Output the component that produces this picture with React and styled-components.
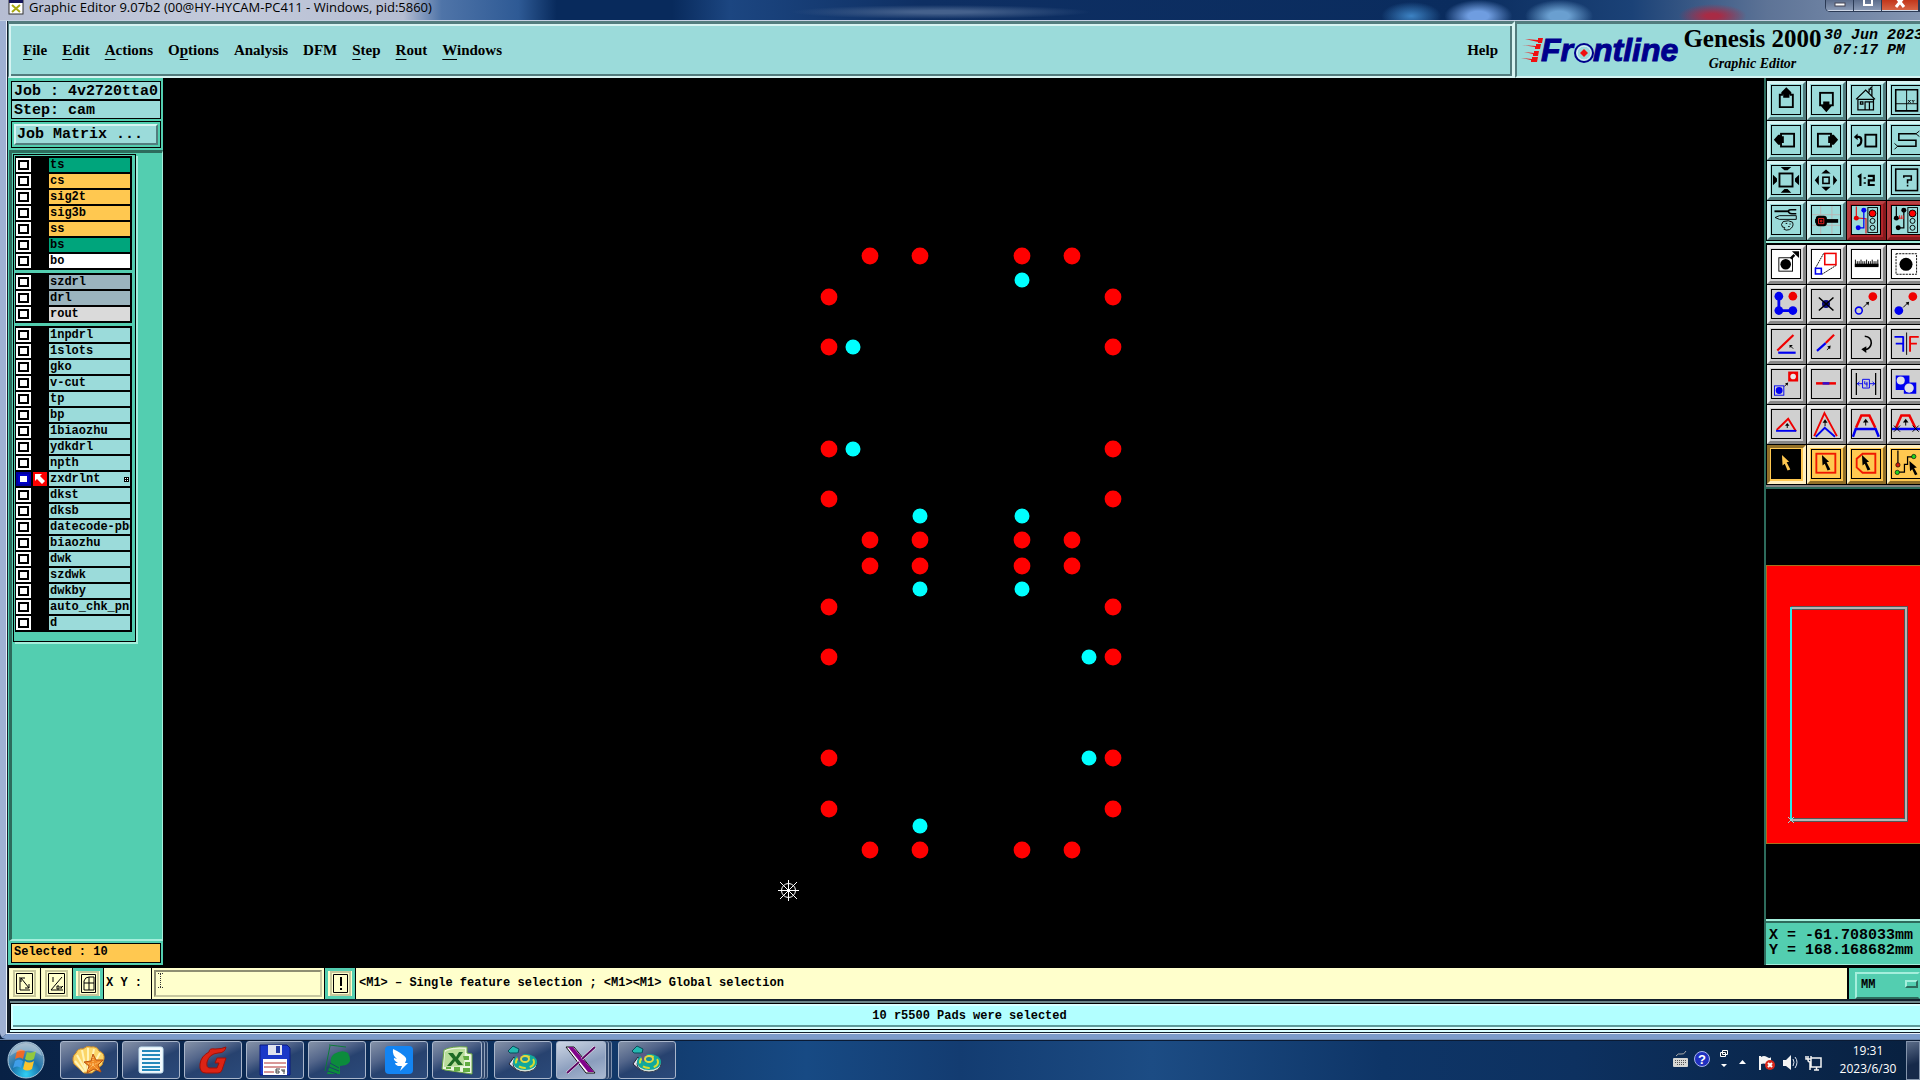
import { useState } from 'react'
import styled, { createGlobalStyle, css } from 'styled-components'

const colors = {
  face: '#9bdbda',
  faceLight: '#d6f4f2',
  faceDark: '#527c7d',
  teal: '#53ceb0',
  tealLight: '#a4efdc',
  tealDark: '#2d6b5c',
  orange: '#ffc850',
  green: '#00a57c',
  cream: '#ffffcc',
  status: '#b2ffff',
}

const mono = '"Liberation Mono", "Courier New", monospace'
const serif = '"Liberation Serif", "Times New Roman", serif'
const ui = '"Open Sans", "Segoe UI", sans-serif'

const GlobalStyle = createGlobalStyle`
  * {
    box-sizing: border-box;
  }

  body {
    margin: 0;
    background: #000;
    color: #000;
    overflow: hidden;
  }

  button, input, select {
    margin: 0;
    padding: 0;
    border: 0;
    border-radius: 0;
    font: inherit;
    color: inherit;
  }
`

const Desktop = styled.div`
  display: flex;
  flex-direction: column;
  min-height: 100vh;
  background: #0b2347;
`

/* ---------- window chrome ---------- */

const TitleBar = styled.div`
  display: flex;
  justify-content: space-between;
  height: 21px;
  padding-left: 8px;
  overflow: hidden;
  border-bottom: 1px solid #c4d0e2;
  background:
    radial-gradient(ellipse 30px 14px at 73.5% 80%, #3d83c4 0%, transparent 100%),
    radial-gradient(ellipse 34px 16px at 77% 80%, #6f9de0 30%, transparent 100%),
    radial-gradient(ellipse 34px 16px at 81.2% 80%, #6a9fd0 30%, transparent 100%),
    radial-gradient(ellipse 34px 12px at 89.2% 80%, #a82b45 20%, transparent 100%),
    radial-gradient(ellipse 150px 7px at 49% 60%, #45618c 20%, transparent 100%),
    linear-gradient(90deg, #b6bdd2 0%, #c3cadb 12%, #b5bdd2 21%, #4f74a8 23%, #2e5a95 27%, #082a5c 29%, #082a5c 35%, #1c4681 38%, #0e2f63 48%, #0a2c5e 76%, #1b4277 85%, #5d7396 92%, #8496b3 100%);
`

const WindowTitle = styled.div`
  display: flex;
  gap: 5px;
  font: 13px/14px ${ui};
  white-space: nowrap;
`

const WindowButtons = styled.div`
  display: flex;
  height: 12px;
  border: 1px solid #2b3a55;
  border-top: 0;
  border-radius: 0 0 0 5px;
  overflow: hidden;
`

const WindowButton = styled.button`
  display: flex;
  justify-content: center;
  width: ${props => (props.$close ? '37px' : '28px')};
  height: 11px;
  border-right: 1px solid #2b3a55;
  box-shadow: inset 0 -1px 0 #cdd6e6;
  background: ${props => (props.$close ? 'linear-gradient(#c2361b, #d8694a)' : 'linear-gradient(#5b6c8b, #8d9db8)')};
`

const WindowFrame = styled.div`
  display: flex;
  flex-direction: column;
  flex: 1;
  border-left: 6px solid #9fb1d3;
  border-bottom: 5px solid #7d9cca;
  box-shadow: inset 1px -1px 0 #e8f0fa;
  border-radius: 0 0 0 6px;
  padding: 0 0 4px 2px;
  background: #14202c;
`

/* ---------- header ---------- */

const Header = styled.header`
  display: flex;
  height: 57px;
`

const MenuBar = styled.nav`
  display: flex;
  flex: 1;
  align-items: center;
  gap: 15px;
  padding: 0 14px 0 14px;
  background: ${colors.face};
  border-style: solid;
  border-width: 3px 3px 2px 1px;
  border-color: ${colors.faceDark} ${colors.faceLight} ${colors.faceLight} ${colors.faceDark};
  box-shadow: inset 2px 2px 0 ${colors.faceLight}, inset -2px -2px 0 ${colors.faceDark};
`

const MenuButton = styled.button`
  background: none;
  font: bold 15px/20px ${serif};
  margin-left: ${props => (props.$last ? 'auto' : 0)};

  u {
    text-underline-offset: 4px;
    text-decoration-thickness: 1px;
  }
`

const Brand = styled.div`
  display: flex;
  flex: 0 0 405px;
  gap: 2px;
  padding-left: 4px;
  overflow: hidden;
  white-space: nowrap;
  background: ${colors.face};
  border-top: 3px solid ${colors.faceDark};
  border-left: 2px solid ${colors.faceDark};
  border-bottom: 2px solid ${colors.faceLight};
`

const BrandLogo = styled.svg`
  flex: 0 0 160px;
  height: 30px;
  margin-top: 12px;
  overflow: visible;
`

const BrandTitle = styled.div`
  flex: 0 0 139px;
  text-align: center;
`

const ProductName = styled.h1`
  margin: 0;
  font: bold 25px/30px ${serif};
`

const ProductPart = styled.p`
  margin: 0;
  font: italic bold 14px/20px ${serif};
`

const DateTime = styled.time`
  font: italic bold 15px/15px ${mono};
  white-space: pre;
  padding-top: 4px;
`

/* ---------- left column ---------- */

const Body = styled.div`
  display: flex;
  flex: 1;
  border-bottom: 3px solid #000;
`

const Sidebar = styled.aside`
  display: flex;
  flex-direction: column;
  flex: 0 0 155px;
  background: ${colors.teal};
`

const JobInfo = styled.div`
  display: flex;
  flex-direction: column;
  padding: 3px 2px 2px 3px;
`

const InfoBox = styled.div`
  height: 19px;
  padding-left: 2px;
  font: bold 15px/19px ${mono};
  white-space: nowrap;
  background: ${colors.face};
  border: 1px solid #000;
`

const MatrixFrame = styled.div`
  margin-top: 2px;
  padding: 2px;
  border: 1px solid #000;
`

const MatrixButton = styled.button`
  width: 100%;
  height: 21px;
  padding-left: 1px;
  text-align: left;
  font: bold 15px/17px ${mono};
  background: ${colors.face};
  border: 2px solid;
  border-color: ${colors.faceLight} ${colors.faceDark} ${colors.faceDark} ${colors.faceLight};
`

const LayerPanel = styled.div`
  flex: 1;
  margin-left: 1px;
  border: solid;
  border-width: 3px 1px 2px 3px;
  border-color: ${colors.tealDark} ${colors.tealLight} ${colors.tealLight} ${colors.tealDark};
`

const LayerList = styled.div`
  display: flex;
  flex-direction: column;
  gap: 3px;
  width: 123px;
  margin-top: 1px;
  margin-left: 1px;
  padding: 1px 3px 9px 1px;
  border: 1px solid #000;
  box-shadow: 2px 2px 0 ${colors.tealLight};
`

const LayerGroup = styled.ul`
  display: flex;
  flex-direction: column;
  gap: 2px;
  margin: 0;
  padding: 2px 2px 2px 1px;
  list-style: none;
  background: #000;
`

const LayerRow = styled.li`
  display: flex;
  height: 14px;
`

const LayerCheck = styled.input`
  appearance: none;
  flex: 0 0 15px;
  height: 14px;
  background: #fff;
  box-shadow: inset 0 0 0 2px #fff, inset 0 0 0 4px #000;

  &:checked {
    box-shadow: inset 0 0 0 2px #0000a0, inset 0 0 0 4px #0000c8;
  }
`

const LayerMark = styled.span`
  display: flex;
  flex: 0 0 18px;
  padding-left: 2px;
`

const LayerName = styled.label`
  position: relative;
  flex: 1;
  min-width: 0;
  padding-left: 1px;
  overflow: hidden;
  white-space: nowrap;
  font: bold 12px/14px ${mono};
  background: ${props => props.$bg};
`

const AffectedMark = styled.svg`
  position: absolute;
  right: 1px;
  top: 5px;
`

const SelectedCount = styled.div`
  height: 20px;
  margin: 2px 2px 2px 3px;
  padding-left: 2px;
  font: bold 12px/17px ${mono};
  background: ${colors.orange};
  border: 1px solid #000;
`

/* ---------- canvas ---------- */

const Canvas = styled.main`
  display: flex;
  flex: 1;
  min-width: 0;
  background: #000;

  svg {
    width: 100%;
    height: 887px;
  }
`

/* ---------- right column ---------- */

const ToolColumn = styled.aside`
  display: flex;
  flex-direction: column;
  flex: 0 0 156px;
  overflow: hidden;
  background: #000;
  border-left: 2px solid ${colors.tealDark};
`

const ToolGroup = styled.div`
  display: grid;
  grid-template-columns: repeat(4, 39px);
  gap: 1px;
  padding: ${props => props.$top} 0 1px 1px;
  border-bottom: 2px solid ${props => props.$line};
`

const skins = {
  view: css`
    background: ${colors.face};
    border-color: ${colors.faceLight} ${colors.faceDark} ${colors.faceDark} ${colors.faceLight};
  `,
  alert: css`
    background: #b3252a;
    border-color: #b84043 #861a1e #861a1e #b84043;
  `,
  white: css`
    background: #d8d8d8;
    border-color: #ececec #868686 #868686 #ececec;
  `,
  edit: css`
    background: #d0d0d0;
    border-color: #ececec #868686 #868686 #ececec;
  `,
  select: css`
    background: ${colors.orange};
    border-color: #fff0c0 #916f28 #916f28 #fff0c0;
  `,
  active: css`
    background: ${colors.orange};
    border-color: #916f28 #fff0c0 #fff0c0 #916f28;
  `,
}

const iconFill = {
  alert: colors.face,
  white: '#fff',
  active: '#000',
}

const ToolButton = styled.button`
  width: 39px;
  height: 39px;
  padding: 1px 2px 2px 1px;
  border: 3px solid;
  ${props => skins[props.$skin]}

  svg {
    display: block;
    width: 30px;
    height: 30px;
    border: 1px solid #000;
    background: ${props => iconFill[props.$skin] || 'none'};
  }
`

const MapPanel = styled.div`
  flex: 1;
  border-top: 2px solid ${colors.tealDark};

  svg {
    display: block;
    width: 154px;
    height: 430px;
  }
`

const Coordinates = styled.div`
  padding: 7px 0 6px 3px;
  font: bold 15px/15px ${mono};
  white-space: pre;
  background: ${colors.teal};
  border-top: 2px solid ${colors.tealLight};
  border-bottom: 1px solid ${colors.tealLight};
  box-shadow: inset 0 2px 0 ${colors.tealDark};
`

/* ---------- bottom bars ---------- */

const CommandBar = styled.div`
  display: flex;
  height: 31px;
  gap: 1px;
  padding-left: 1px;
  background: #000;
  font: bold 12px/30px ${mono};
`

const SnapButton = styled.button`
  display: flex;
  align-items: center;
  justify-content: center;
  flex: 0 0 ${props => (props.$raised ? '30px' : '31px')};
  background: ${colors.cream};
  border: ${props => (props.$raised ? `3px solid ${colors.teal}` : '1px solid #f4f4c4')};

  svg {
    outline: 2px solid #c8c89c;
    outline-offset: 1px;
  }
`

const CoordLabel = styled.label`
  flex: 0 0 47px;
  padding-left: 2px;
  white-space: pre;
  background: ${colors.cream};
`

const CoordField = styled.div`
  position: relative;
  flex: 0 0 172px;
  padding: 2px;
  background: ${colors.cream};
`

const CoordInput = styled.input`
  display: block;
  width: 100%;
  height: 27px;
  padding: 0 12px;
  background: ${colors.cream};
  border: 2px solid;
  border-color: #8f8f72 #c8c8a0 #c8c8a0 #8f8f72;
  outline: 0;
`

const TextPointer = styled.svg`
  position: absolute;
  left: 6px;
  top: 5px;
  pointer-events: none;
`

const Hint = styled.div`
  flex: 1;
  padding-left: 3px;
  white-space: nowrap;
  background: ${colors.cream};
`

const UnitsPanel = styled.div`
  position: relative;
  flex: 0 0 71px;
  margin-left: 1px;
  padding: 2px 0 2px 6px;
  background: ${colors.teal};

  svg {
    position: absolute;
    right: 2px;
    top: 12px;
    pointer-events: none;
  }
`

const UnitsSelect = styled.select`
  appearance: none;
  width: 100%;
  height: 27px;
  padding-left: 4px;
  line-height: 23px;
  background: ${colors.teal};
  border: 2px solid;
  border-color: ${colors.tealLight} ${colors.teal} ${colors.tealDark} ${colors.tealLight};
`

const StatusBar = styled.div`
  height: 27px;
  margin: 4px 0 0 2px;
  padding-left: 8px;
  text-align: center;
  font: bold 12px/24px ${mono};
  background: ${colors.status};
  border: 1px solid #000;
  border-right: 0;
  box-shadow: inset 2px 2px 0 #d8ffff, inset 0 -2px 0 #d8ffff, inset 0 -4px 0 #5e9a9a, 0 -2px 0 #6d8588, 0 2px 0 #d8ffff;
`

/* ---------- taskbar ---------- */

const Taskbar = styled.footer`
  display: flex;
  justify-content: space-between;
  height: 41px;
  border-top: 1px solid #6d87ac;
  box-shadow: inset 0 1px 0 #0a1a33;
  background: linear-gradient(90deg, #082145 0%, #0f3463 30%, #174a84 42%, #133c71 50%, #1c4c84 60%, #0e3567 72%, #0d3160 82%, #08203f 100%);
`

const TaskList = styled.div`
  display: flex;
  align-items: center;
  gap: 4px;
`

const StartButton = styled.button`
  width: 56px;
  height: 38px;
  padding-left: 7px;
  text-align: left;
  background: none;
`

const TaskButton = styled.button`
  display: flex;
  align-items: center;
  justify-content: center;
  width: ${props => (props.$stacked ? '50px' : '58px')};
  height: 38px;
  margin-right: ${props => (props.$stacked ? '8px' : 0)};
  border: 1px solid #a9b6cb;
  border-radius: 3px;
  background: ${props => (props.$active
    ? 'linear-gradient(160deg, #cdd6e4, #8a9dbd 60%, #aab9d2)'
    : 'linear-gradient(155deg, #8592a8 0%, #52658a 35%, #27426f 55%, #2b4a7a 100%)')};
  box-shadow: ${props => (props.$stacked
    ? '2px 0 0 #31496f, 3px 0 0 #92a3bd, 5px 0 0 #2a4268, 6px 0 0 #7d90ad'
    : 'none')};
`

const Tray = styled.div`
  display: flex;
  align-items: center;
  color: #fff;
`

const TrayIcons = styled.svg`
  width: 152px;
  height: 36px;
`

const Clock = styled.time`
  width: 76px;
  margin-left: 6px;
  text-align: center;
  font: 12px/18px ${ui};
`

const ShowDesktop = styled.button`
  width: 14px;
  height: 39px;
  border: 1px solid #8494ac;
  background: linear-gradient(160deg, #5b6c88, #16294a 60%);
`

const layerGroups = [
  [
    ['ts', colors.green],
    ['cs', colors.orange],
    ['sig2t', colors.orange],
    ['sig3b', colors.orange],
    ['ss', colors.orange],
    ['bs', colors.green],
    ['bo', '#ffffff'],
  ],
  [
    ['szdrl', '#9bb4be'],
    ['drl', '#9bb4be'],
    ['rout', '#dadada'],
  ],
  [
    '1npdrl', '1slots', 'gko', 'v-cut', 'tp', 'bp', '1biaozhu', 'ydkdrl', 'npth',
    'zxdrlnt', 'dkst', 'dksb', 'datecode-pbd', 'biaozhu', 'dwk', 'szdwk', 'dwkby',
    'auto_chk_pnl', 'd',
  ].map(name => [name, colors.face]),
]

const menus = [
  ['', 'F', 'ile'],
  ['', 'E', 'dit'],
  ['', 'A', 'ctions'],
  ['O', 'p', 'tions'],
  ['Analysis', '', ''],
  ['DFM', '', ''],
  ['', 'S', 'tep'],
  ['', 'R', 'out'],
  ['', 'W', 'indows'],
]

const redPads = [
  [870, 256], [920, 256], [1022, 256], [1072, 256],
  [829, 297], [1113, 297], [829, 347], [1113, 347],
  [829, 449], [1113, 449], [829, 499], [1113, 499],
  [870, 540], [920, 540], [1022, 540], [1072, 540],
  [870, 566], [920, 566], [1022, 566], [1072, 566],
  [829, 607], [1113, 607], [829, 657], [1113, 657],
  [829, 758], [1113, 758], [829, 809], [1113, 809],
  [870, 850], [920, 850], [1022, 850], [1072, 850],
]

const selectedPads = [
  [1022, 280], [853, 347], [853, 449], [920, 516], [1022, 516],
  [920, 589], [1022, 589], [1089, 657], [1089, 758], [920, 826],
]

// tool icons are drawn on a 90x90 grid
const blue = '#0000f0'
const red = '#f00000'

const Cursor = ({ fill = '#000' }) => (
  <path d="M32 16L55 38L47 39L59 63L50 66L41 44L34 50Z" fill={fill} />
)

const MiniArrow = ({ d, head }) => (
  <g>
    <path d={d} fill="none" stroke="#000" strokeWidth="3" />
    <path d={head} fill="#000" />
  </g>
)

const TrafficLight = () => (
  <g stroke="#000" strokeWidth="3">
    <rect x="51" y="5" width="31" height="80" fill={colors.face} />
    <circle cx="66" cy="24" r="11" fill="#f00" />
    <circle cx="66" cy="48" r="8" fill="none" />
    <circle cx="66" cy="70" r="8" fill="none" />
  </g>
)

const viewTools = [
  ['Pan up', 'view', <>
    <path d="M35 28H25V68H67V28H57" fill="none" stroke="#000" strokeWidth="6" />
    <path d="M46 4L62 20V27H56V38H36V27H30V20Z" />
  </>],
  ['Pan down', 'view', <>
    <rect x="26" y="22" width="41" height="40" fill="none" stroke="#000" strokeWidth="6" />
    <path d="M46 84L62 66V61H56V50H36V61H30V66Z" />
  </>],
  ['Home', 'view', <>
    <path d="M13 43L44 13L74 43M19 43H69V77H19ZM55 21V10H64V33M58 8L66 2M42 77V51H69M56 77V53M27 51H35V58H27Z" fill="none" stroke="#000" strokeWidth="4" />
  </>],
  ['Origin', 'view', <>
    <path d="M12 12H82V80H12Z" fill="none" stroke="#000" strokeWidth="5" />
    <path d="M47 12V80M12 57H82" fill="none" stroke="#000" strokeWidth="3" />
    <path d="M52 45L60 54M60 45L52 54M64 45L68 50V54M72 45L68 50" fill="none" stroke="#000" strokeWidth="3" />
  </>],
  ['Pan left', 'view', <>
    <rect x="29" y="25" width="42" height="41" fill="none" stroke="#000" strokeWidth="6" />
    <path d="M6 44L20 28H27V33H38V55H27V60H20Z" />
  </>],
  ['Pan right', 'view', <>
    <rect x="19" y="25" width="42" height="41" fill="none" stroke="#000" strokeWidth="6" />
    <path d="M84 44L70 28H63V33H52V55H63V60H70Z" />
  </>],
  ['Previous view', 'view', <>
    <rect x="43" y="28" width="35" height="38" fill="none" stroke="#000" strokeWidth="6" />
    <path d="M14 35H22Q30 36 30 46Q30 62 16 64" fill="none" stroke="#000" strokeWidth="7" />
    <path d="M6 35L18 24V46Z" />
  </>],
  ['Snake route', 'view', <>
    <path d="M77 25H22V46H77V65H17" fill="none" stroke="#000" strokeWidth="5" />
    <path d="M77 25L88 16M77 25L88 34M18 65L8 56M18 65L8 75" fill="none" stroke="#000" strokeWidth="3" />
  </>],
  ['Zoom in', 'view', <>
    <rect x="24" y="24" width="42" height="42" fill="none" stroke="#000" strokeWidth="6" />
    <path d="M28 3H62L50 14H40ZM28 86H62L50 74H40ZM3 28V62L16 50V40ZM87 28V62L74 50V40Z" />
  </>],
  ['Zoom out', 'view', <>
    <rect x="35" y="36" width="20" height="20" fill="none" stroke="#000" strokeWidth="5" />
    <path d="M45 11L60 24H30ZM45 80L60 67H30ZM9 46L22 30V62ZM81 46L68 30V62Z" />
  </>],
  ['Scale', 'view', <>
    <path d="M19 35L27 30V64M41 36V41M41 52V57M51 32H70V46H54V61H73" fill="none" stroke="#000" strokeWidth="7" />
  </>],
  ['Query', 'view', <>
    <rect x="12" y="10" width="70" height="69" fill="none" stroke="#000" strokeWidth="5" />
    <path d="M38 38V32H62V45H50V56M50 60V66" fill="none" stroke="#000" strokeWidth="5" />
  </>],
  ['Setup', 'view', <>
    <path d="M8 17H52" fill="none" stroke="#000" strokeWidth="6" />
    <path d="M78 12H64Q53 11 53 17Q53 24 64 25H78" fill="none" stroke="#000" strokeWidth="5" />
    <path d="M10 37L24 31H78V43H24ZM36 50Q54 44 66 52Q72 66 56 76Q44 80 38 74Q46 68 34 68Q26 60 36 50ZM44 56H49M56 58H60M52 66H57" fill="none" stroke="#000" strokeWidth="3" />
  </>],
  ['Grid snap', 'view', <>
    <path d="M28 0V90M64 0V90M0 28H90M0 62H90" stroke="#b9b3b3" strokeWidth="3" />
    <path d="M10 48H84" stroke="#000" strokeWidth="12" />
    <rect x="12" y="31" width="36" height="34" rx="10" />
    <path d="M21 40H38V57H21ZM27 46H32V51H27Z" fill="none" stroke="#f02020" strokeWidth="3" />
  </>],
  ['Net check', 'alert', <>
    <path d="M14 2V38L45 41V88" fill="none" stroke="#e02020" strokeWidth="4" />
    <path d="M38 14V70H20" fill="none" stroke={blue} strokeWidth="4" />
    <circle cx="14" cy="39" r="8" fill="#e00000" />
    <circle cx="38" cy="14" r="8" fill={blue} />
    <circle cx="20" cy="70" r="8" fill={blue} />
    <TrafficLight />
  </>],
  ['Clearance check', 'alert', <>
    <path d="M14 2V38M38 14V70H20" fill="none" stroke="#000" strokeWidth="4" />
    <path d="M14 39H34M24 30V42M30 30V42M36 30V42" fill="none" stroke="#e02020" strokeWidth="3" />
    <circle cx="14" cy="39" r="8" />
    <circle cx="38" cy="14" r="8" />
    <circle cx="20" cy="70" r="8" />
    <TrafficLight />
  </>],
]

const editTools = [
  ['Move', 'white', <>
    <rect x="22" y="25" width="44" height="43" fill="none" stroke="#000" strokeWidth="3" />
    <circle cx="44" cy="46" r="17" />
    <path d="M60 28L72 16" stroke="#000" strokeWidth="8" />
    <path d="M64 4H87V26Z" />
  </>],
  ['Stretch', 'white', <>
    <path d="M11 58L38 10M32 78L80 48" fill="none" stroke="#000" strokeWidth="3" strokeDasharray="6 2" />
    <rect x="41" y="11" width="36" height="36" fill="none" stroke={red} strokeWidth="5" />
    <rect x="11" y="59" width="19" height="18" fill="none" stroke={blue} strokeWidth="5" />
  </>],
  ['Measure', 'white', <>
    <path d="M11 31V53M17 36V53M23 36V53M29 31V53M35 36V53M41 36V53M47 31V53M53 36V53M59 36V53M65 31V53M71 36V53M77 36V53M83 31V53" stroke="#000" strokeWidth="3" />
    <rect x="9" y="44" width="76" height="11" />
  </>],
  ['Select area', 'white', <>
    <rect x="13" y="12" width="66" height="66" fill="none" stroke="#000" strokeWidth="3" strokeDasharray="7 3" />
    <circle cx="45" cy="46" r="21" />
  </>],
  ['Add line', 'edit', <>
    <path d="M22 20V66H67" fill="none" stroke={blue} strokeWidth="9" />
    <circle cx="22" cy="20" r="14" fill={blue} />
    <circle cx="22" cy="66" r="14" fill={blue} />
    <circle cx="67" cy="66" r="14" fill={blue} />
    <circle cx="67" cy="20" r="14" fill={red} />
  </>],
  ['Delete', 'edit', <>
    <circle cx="45" cy="45" r="13" fill="#0a0a80" />
    <path d="M22 24L69 66M69 24L22 66" stroke="#000" strokeWidth="5" />
  </>],
  ['Move pad', 'edit', <>
    <circle cx="67" cy="21" r="14" fill={red} />
    <circle cx="22" cy="66" r="11" fill="none" stroke={blue} strokeWidth="5" />
    <MiniArrow d="M36 56L50 42" head="M55 38L44 40L53 50Z" />
  </>],
  ['Copy pad', 'edit', <>
    <circle cx="67" cy="21" r="14" fill={red} />
    <circle cx="22" cy="66" r="14" fill={blue} />
    <MiniArrow d="M36 56L50 42" head="M55 38L44 40L53 50Z" />
  </>],
  ['Rotate', 'edit', <>
    <path d="M69 16L17 66" stroke={red} strokeWidth="7" />
    <path d="M20 73H76" stroke={blue} strokeWidth="7" />
    <MiniArrow d="M68 60L60 52" head="M56 48H67L57 58Z" />
  </>],
  ['Extend line', 'edit', <>
    <path d="M71 15L44 42" stroke={red} strokeWidth="7" />
    <path d="M44 42L16 67" stroke={blue} strokeWidth="7" />
    <MiniArrow d="M48 64L56 56" head="M60 50L49 53L58 62Z" />
  </>],
  ['Flip arc', 'edit', <>
    <path d="M41 20Q62 22 62 42Q60 60 42 63" fill="none" stroke="#000" strokeWidth="5" />
    <path d="M30 62L46 52V74Z" />
  </>],
  ['Mirror', 'edit', <>
    <path d="M47 8V80" stroke="#000" strokeWidth="3" />
    <path d="M8 22H36M12 44H36M36 20V70" fill="none" stroke={blue} strokeWidth="6" />
    <path d="M86 22H58M80 44H58M58 20V70" fill="none" stroke={red} strokeWidth="6" />
  </>],
  ['Resize', 'edit', <>
    <rect x="52" y="5" width="32" height="32" fill={red} />
    <circle cx="68" cy="21" r="9" fill="#e8e8e8" />
    <rect x="8" y="51" width="30" height="30" fill="none" stroke={blue} strokeWidth="3" />
    <circle cx="23" cy="66" r="11" fill={blue} />
    <MiniArrow d="M40 52L48 45" head="M52 40L42 43L50 51Z" />
  </>],
  ['Merge', 'edit', <>
    <path d="M13 43H77" stroke={red} strokeWidth="8" />
    <path d="M34 43H56" stroke="#3010d0" strokeWidth="8" />
  </>],
  ['Spacing', 'edit', <>
    <path d="M14 10V80M76 10V80" stroke="#000" strokeWidth="4" />
    <path d="M34 30H56V58H34ZM16 44H34M56 44H74M24 38L17 44L24 50M66 38L73 44L66 50M41 36V45H50M48 38V54" fill="none" stroke={blue} strokeWidth="3" />
  </>],
  ['Reshape', 'edit', <>
    <path d="M12 18H56V40H78V76H38V64H12Z" fill={blue} />
    <circle cx="28" cy="34" r="13" fill="#e0e0e8" />
    <circle cx="55" cy="58" r="15" fill="#e0e0e8" />
  </>],
  ['Chamfer', 'edit', <>
    <path d="M15 64L52 28L77 68" fill="none" stroke={red} strokeWidth="6" />
    <path d="M13 67H78" stroke={blue} strokeWidth="6" />
    <MiniArrow d="M49 58V48" head="M49 42L56 51H42Z" />
  </>],
  ['Peak', 'edit', <>
    <path d="M7 84L40 10L80 84" fill="none" stroke={red} strokeWidth="6" />
    <path d="M12 86L41 57L74 86" fill="none" stroke={blue} strokeWidth="6" />
    <MiniArrow d="M42 52V38" head="M42 30L50 41H34Z" />
  </>],
  ['Trapezoid', 'edit', <>
    <path d="M13 57L30 18H56L75 57" fill="none" stroke={red} strokeWidth="8" />
    <path d="M3 86L12 61H76L86 86" fill="none" stroke={blue} strokeWidth="8" />
    <MiniArrow d="M44 50V36" head="M44 28L53 40H35Z" />
  </>],
  ['Trim', 'edit', <>
    <path d="M13 57L30 18H56L75 57" fill="none" stroke={red} strokeWidth="8" />
    <path d="M0 61H90" stroke={blue} strokeWidth="8" />
    <path d="M6 50L26 70M26 50L6 70M66 50L86 70M86 50L66 70" stroke="#000" strokeWidth="3" />
    <MiniArrow d="M44 50V36" head="M44 28L53 40H35Z" />
  </>],
  ['Select single', 'active', <Cursor fill={colors.orange} />],
  ['Select rectangle', 'select', <>
    <rect x="14" y="12" width="61" height="61" fill="none" stroke="#f01800" strokeWidth="6" />
    <Cursor />
  </>],
  ['Select polygon', 'select', <>
    <path d="M34 12H75V73H34L15 56V28Z" fill="none" stroke="#f01800" strokeWidth="6" />
    <Cursor />
  </>],
  ['Select net', 'select', <>
    <path d="M19 2V46M19 71H40V46H50V22H68" fill="none" stroke="#000" strokeWidth="4" />
    <g stroke="#000" strokeWidth="2">
      <circle cx="19" cy="48" r="7" fill="#d02010" />
      <circle cx="17" cy="72" r="7" fill="#20d020" />
      <circle cx="70" cy="21" r="7" fill="#20d020" />
    </g>
    <path d="M56 35L80 56L71 58L82 78L74 81L65 62L58 68Z" />
  </>],
]

const Tools = ({ items }) => items.map(([label, skin, icon]) => (
  <ToolButton key={label} $skin={skin} aria-label={label}>
    <svg viewBox="0 0 90 90">{icon}</svg>
  </ToolButton>
))

const TapeIcon = () => (
  <svg width="36" height="30" viewBox="0 0 36 30">
    <path d="M3 6L8 1L14 4L13 8H5Z" fill="#24b8b0" stroke="#0a4a5a" />
    <path d="M4 19L9 12L14 22L11 25Z" fill="#e4e4ee" stroke="#223" />
    <ellipse cx="20" cy="19" rx="12" ry="8" fill="#d6e2d8" stroke="#333c50" />
    <ellipse cx="20" cy="17" rx="12" ry="8" fill="#12a89c" />
    <ellipse cx="20" cy="17" rx="9" ry="6" fill="none" stroke="#d8dc30" strokeWidth="2" strokeDasharray="7 4" />
    <path d="M11 9Q16 6 20 12L14 17Z" fill="#5a5a88" />
    <ellipse cx="20" cy="14" rx="5" ry="4" fill="#e2d840" />
    <ellipse cx="20" cy="14" rx="3" ry="2" fill="#1a8c98" />
  </svg>
)

const tasks = [
  ['Shell', {}, (
    <svg width="34" height="30" viewBox="0 0 34 30">
      <path d="M12 28L2 19Q-1 12 4 8Q6 3 11 4Q15 0 19 2Q25 1 27 6Q33 8 32 14L30 20L20 28Z" fill="#fbd568" stroke="#c9882a" />
      <path d="M14 26L5 10M14 25L10 5M16 24L16 3M18 24L22 4M19 24L28 8M12 27L3 16" stroke="#fff3b8" strokeWidth="2" />
      <path d="M21 9L24 15L31 15L26 20L29 27L22 24L15 28L17 21L12 17L19 16Z" fill="#f08a26" stroke="#b85210" />
      <path d="M21 12V20L28 17M21 20L26 25M21 20L16 25M21 20L15 18" fill="none" stroke="#ffd080" strokeDasharray="1 1" />
    </svg>
  )],
  ['Notepad', {}, (
    <svg width="26" height="28" viewBox="0 0 26 28">
      <rect x="1" y="1" width="24" height="26" rx="2" fill="#f2f9fd" stroke="#c8e4f2" />
      <path d="M4 5H22M4 9H22M4 13H22M4 17H22M4 21H22M4 24H22" stroke="#2588ba" strokeWidth="2" />
    </svg>
  )],
  ['Genesis', {}, (
    <svg width="30" height="28" viewBox="0 0 30 28">
      <path d="M28 1Q27 7 20 7Q11 8 9 16Q8 22 12 22H19L21 17H17L19 12H28L24 24Q23 27 20 27H8Q1 27 2 18Q3 10 11 6Q11 2 17 3Q24 3 28 1Z" fill="#dc2314" stroke="#a01008" />
    </svg>
  )],
  ['Floppy', {}, (
    <svg width="32" height="32" viewBox="0 0 32 32">
      <path d="M1 1H28L31 4V31H1Z" fill="#1a38c8" stroke="#0a1a80" />
      <rect x="9" y="1" width="14" height="10" fill="#dfe2ee" />
      <rect x="17" y="2" width="4" height="7" fill="#2038a0" />
      <rect x="4" y="15" width="24" height="16" fill="#fff" />
      <path d="M5 19H27M5 23H27M5 28H15" stroke="#b03030" />
      <path d="M21 25H17V29H20V27H17M23 25V27H26M25 25V30M28 28H29" fill="none" stroke="#444" />
    </svg>
  )],
  ['PCB', {}, (
    <svg width="34" height="32" viewBox="0 0 34 32">
      <path d="M9 1Q18 2 26 3M10 2L5 27" fill="none" stroke="#0d7c3a" />
      <path d="M14 10Q22 5 28 9Q33 18 26 21L20 22V30H7L11 18Q10 13 14 10Z" fill="#0c8c3c" />
      <path d="M10 19L19 24M9 23L19 27M8 27L17 30" stroke="#1a4466" />
    </svg>
  )],
  ['DingTalk', {}, (
    <svg width="28" height="28" viewBox="0 0 28 28">
      <rect width="28" height="28" rx="4" fill="#1384f2" />
      <path d="M8 3Q17 7 21 12Q22 14 20 17H23L15 25L17 20H13Q10 19 10 17L13 17Q8 14 9 12L12 13Q7 9 8 3Z" fill="#fff" />
    </svg>
  )],
  ['Excel', { $stacked: true }, (
    <svg width="32" height="30" viewBox="0 0 32 30">
      <path d="M3 5Q10 1 26 2V8L31 9V29L4 25L1 24Z" fill="#eaf5df" stroke="#6aa845" />
      <path d="M4 7Q10 3 24 4L23 21L3 22Z" fill="#b8dd9a" />
      <path d="M7 8H12L15 12L18 7H22L17 14L22 20H17L14 16L10 21H6L12 14Z" fill="#1d6b24" />
      <path d="M22 11H28V15H23ZM24 17H29V21H24ZM5 22H10V24H5ZM13 22H19V26H13ZM22 23H29V27H22Z" fill="#62ad42" />
    </svg>
  )],
  ['Toolkit', {}, <TapeIcon />],
  ['X server', { $stacked: true, $active: true }, (
    <svg width="34" height="28" viewBox="0 0 34 28">
      <path d="M2 1H10L31 27H22Z" fill="#fff" stroke="#111" />
      <path d="M4 1H9L30 26H24Z" fill="#82058a" />
      <path d="M31 1L18 13M15 16L3 27" stroke="#fff" strokeWidth="3" />
      <path d="M31 1L18 13M15 16L3 27" stroke="#5c0862" strokeWidth="2" />
    </svg>
  )],
  ['Toolkit 2', {}, <TapeIcon />],
]

function FrontlineLogo() {
  return (
    <BrandLogo viewBox="0 0 160 30">
      <path d="M4 3L17 4V2H22L21 7H17V6ZM1 9L15 10V8H20L19 13H14V11ZM3 16L13 17V15H18L17 20H12V18ZM0 22L11 23V21H17L16 26H10V24Z" fill="#f01010" />
      <g fill="#00008c" stroke="#00008c" fontFamily='"Liberation Sans", Arial, sans-serif' fontWeight="bold" fontStyle="italic" fontSize="32">
        <text x="20" y="25">Fr</text>
        <text x="72" y="25">ntline</text>
      </g>
      <circle cx="63" cy="17" r="9" fill="none" stroke="#00008c" strokeWidth="2" />
      <circle cx="63" cy="17" r="7" fill="none" stroke="#e8f0ff" />
      <path d="M63 13L67 17L63 21L59 17Z" fill="#f01010" />
    </BrandLogo>
  )
}

function LayerSidebar() {
  return (
    <Sidebar>
      <JobInfo>
        <InfoBox>Job : 4v2720tta0</InfoBox>
        <InfoBox>Step: cam</InfoBox>
        <MatrixFrame>
          <MatrixButton>Job Matrix ...</MatrixButton>
        </MatrixFrame>
      </JobInfo>
      <LayerPanel>
        <LayerList>
          {layerGroups.map((group, i) => (
            <LayerGroup key={i}>
              {group.map(([name, bg]) => {
                const isWork = name === 'zxdrlnt'
                return (
                  <LayerRow key={name}>
                    <LayerCheck type="checkbox" id={`layer-${name}`} defaultChecked={isWork} />
                    <LayerMark>
                      {isWork && (
                        <svg width="14" height="14" viewBox="0 0 14 14">
                          <rect width="14" height="14" fill="#f00" />
                          <path d="M2 2H9L7 4L12 9L9 12L4 7L2 9Z" fill="#fff" />
                        </svg>
                      )}
                    </LayerMark>
                    <LayerName htmlFor={`layer-${name}`} $bg={bg}>
                      {name}
                      {isWork && (
                        <AffectedMark width="5" height="5" viewBox="0 0 5 5">
                          <path d="M0 0H5V5H0Z" />
                          <path d="M1 1H2V2H1ZM3 1H4V2H3ZM1 3H2V4H1ZM3 3H4V4H3Z" fill="#fff" />
                        </AffectedMark>
                      )}
                    </LayerName>
                  </LayerRow>
                )
              })}
            </LayerGroup>
          ))}
        </LayerList>
      </LayerPanel>
      <SelectedCount>Selected : 10</SelectedCount>
    </Sidebar>
  )
}

function Board() {
  return (
    <Canvas>
      <svg viewBox="163 78 1601 887">
        {redPads.map(([x, y]) => (
          <circle key={`${x}-${y}`} cx={x} cy={y} r="8.4" fill="#f00" />
        ))}
        {selectedPads.map(([x, y]) => (
          <circle key={`${x}-${y}`} cx={x} cy={y} r="7.5" fill="#0ff" />
        ))}
        <g fill="none" stroke="#fff">
          <circle cx="788.5" cy="890.5" r="7" />
          <path d="M778 890.5H799M788.5 880V901M780 882L797 899M797 882L780 899" />
        </g>
      </svg>
    </Canvas>
  )
}

function App() {
  const [coords, setCoords] = useState('')
  const [units, setUnits] = useState('MM')

  return (
    <Desktop>
      <GlobalStyle />
      <TitleBar>
        <WindowTitle>
          <svg width="16" height="15" viewBox="0 0 16 15">
            <rect x="1" y="0" width="14" height="14" fill="#fff" stroke="#333" />
            <rect x="1" y="0" width="14" height="3" fill="#15155a" />
            <path d="M4 5L12 12M12 5L4 12" stroke="#a8a810" strokeWidth="2" />
          </svg>
          Graphic Editor 9.07b2 (00@HY-HYCAM-PC411 - Windows, pid:5860)
        </WindowTitle>
        <WindowButtons>
          <WindowButton aria-label="Minimize">
            <svg width="12" height="8"><rect x="1" y="3" width="10" height="3" fill="#fff" stroke="#445" /></svg>
          </WindowButton>
          <WindowButton aria-label="Restore">
            <svg width="12" height="8"><rect x="2" y="-3" width="8" height="8" fill="none" stroke="#fff" strokeWidth="2" /></svg>
          </WindowButton>
          <WindowButton $close aria-label="Close">
            <svg width="12" height="8"><path d="M2 -3L10 7M10 -3L2 7" stroke="#fff" strokeWidth="3" /></svg>
          </WindowButton>
        </WindowButtons>
      </TitleBar>

      <WindowFrame>
        <Header>
          <MenuBar>
            {menus.map(([before, key, after]) => (
              <MenuButton key={before + key + after}>
                {before}{key && <u>{key}</u>}{after}
              </MenuButton>
            ))}
            <MenuButton $last>Help</MenuButton>
          </MenuBar>
          <Brand>
            <FrontlineLogo />
            <BrandTitle>
              <ProductName>Genesis 2000</ProductName>
              <ProductPart>Graphic Editor</ProductPart>
            </BrandTitle>
            <DateTime>{'30 Jun 2023\n 07:17 PM'}</DateTime>
          </Brand>
        </Header>

        <Body>
          <LayerSidebar />
          <Board />
          <ToolColumn>
            <ToolGroup $top="3px" $line={colors.tealLight}>
              <Tools items={viewTools} />
            </ToolGroup>
            <ToolGroup $top="2px" $line="#868686">
              <Tools items={editTools} />
            </ToolGroup>
            <MapPanel>
              <svg viewBox="1766 489 154 430">
                <rect x="1766.5" y="565.5" width="160" height="278" fill="#f00" stroke="#a8701c" />
                <path d="M1791 608H1906V820H1791" fill="none" stroke="#555" strokeWidth="4" />
                <path d="M1791 608H1906V820H1791" fill="none" stroke="#b4b4b4" strokeWidth="2" />
                <path d="M1791 607V820" stroke="#2ee8e8" strokeWidth="2" />
                <path d="M1788 817L1794 823M1794 817L1788 823" stroke="#9bdbda" />
              </svg>
            </MapPanel>
            <Coordinates>{'X = -61.708033mm\nY = 168.168682mm'}</Coordinates>
          </ToolColumn>
        </Body>

        <CommandBar>
          <SnapButton aria-label="Snap off">
            <svg width="17" height="21" viewBox="0 0 17 21" fill="none" stroke="#000">
              <path d="M.5 .5H16.5V20.5H.5ZM4 4V17H14M5 5L13 15M5 9V5H9M13 11V15H9" />
            </svg>
          </SnapButton>
          <SnapButton aria-label="Snap to angle">
            <svg width="17" height="21" viewBox="0 0 17 21" fill="none" stroke="#000">
              <path d="M.5 .5H16.5V20.5H.5ZM14 4L3 17H15M5 4V9M9 13V16H11V13ZM13 13V16M15 13L13 15" />
            </svg>
          </SnapButton>
          <SnapButton $raised aria-label="Snap to grid">
            <svg width="15" height="19" viewBox="0 0 15 19" fill="none" stroke="#000">
              <path d="M.5 .5H14.5V18.5H.5ZM8 3V16M3 9H13M3 16V7Q4 3 8 3H13V16Z" />
            </svg>
          </SnapButton>
          <CoordLabel htmlFor="xy">X Y :</CoordLabel>
          <CoordField>
            <CoordInput id="xy" value={coords} onChange={e => setCoords(e.target.value)} />
            <TextPointer width="5" height="15" viewBox="0 0 5 15">
              <path d="M0 .5H5M0 14.5H5M2.5 1V14" stroke="#333" strokeDasharray="1 1" />
            </TextPointer>
          </CoordField>
          <SnapButton $raised aria-label="Repeat message">
            <svg width="15" height="19" viewBox="0 0 15 19">
              <path d="M.5 .5H14.5V18.5H.5Z" fill="none" stroke="#000" />
              <path d="M7 3H9V12H7ZM7 14H9V16H7Z" />
            </svg>
          </SnapButton>
          <Hint>{'<M1> – Single feature selection ; <M1><M1> Global selection'}</Hint>
          <UnitsPanel>
            <UnitsSelect aria-label="Units" value={units} onChange={e => setUnits(e.target.value)}>
              <option>MM</option>
              <option>Inch</option>
            </UnitsSelect>
            <svg width="13" height="8" viewBox="0 0 13 8">
              <path d="M0 8V0H13L11 2H2V6Z" fill={colors.tealLight} />
              <path d="M0 8H13V0L11 2V6H2Z" fill={colors.tealDark} />
            </svg>
          </UnitsPanel>
        </CommandBar>

        <StatusBar>10 r5500 Pads were selected</StatusBar>
      </WindowFrame>

      <Taskbar>
        <TaskList>
          <StartButton aria-label="Start">
            <svg width="38" height="38" viewBox="0 0 38 38">
              <defs>
                <radialGradient id="orb" cx="50%" cy="90%" r="90%">
                  <stop offset="0" stopColor="#2fd0f5" />
                  <stop offset="45%" stopColor="#1c74ac" />
                  <stop offset="100%" stopColor="#8fa8bd" />
                </radialGradient>
              </defs>
              <circle cx="19" cy="19" r="18" fill="url(#orb)" stroke="#a8c4d8" />
              <path d="M10 10Q14 7 18 10L16 18Q13 15 8 18Z" fill="#ee6a28" />
              <path d="M20 11Q24 13 29 10L27 18Q22 21 18 18Z" fill="#92c83e" />
              <path d="M8 20Q12 17 16 20L14 27Q10 24 6 27Z" fill="#3f9ee8" />
              <path d="M18 20Q22 23 27 20L25 28Q20 31 16 28Z" fill="#fcc42c" />
              <path d="M3 15Q6 3 19 2Q32 3 35 15Q27 9 19 10Q11 9 3 15Z" fill="#fff" opacity=".3" />
            </svg>
          </StartButton>
          {tasks.map(([label, state, icon]) => (
            <TaskButton key={label} aria-label={label} {...state}>{icon}</TaskButton>
          ))}
        </TaskList>
        <Tray>
          <TrayIcons viewBox="0 0 152 36">
            <g fill="#d8d8d4">
              <rect x="1" y="16" width="15" height="9" rx="1" />
              <path d="M4 14Q6 11 9 12T14 9" fill="none" stroke="#aaa" />
              <path d="M3 18.500H14M3 20.500H14M5 22.500H12" stroke="#555" strokeDasharray="1 1" />
            </g>
            <circle cx="30" cy="17" r="7.500" fill="#2030c0" stroke="#aab6ea" />
            <text x="30" y="22" fill="#fff" textAnchor="middle" fontFamily="Liberation Sans, sans-serif" fontWeight="bold" fontSize="13">?</text>
            <path d="M50.500 8.500H55.500V12.500H50.500ZM48.500 10.500H53.500V14.500H48.500Z" fill="#123" stroke="#fff" />
            <path d="M49 22H55L52 25ZM67 22H74L70.500 18Z" fill="#fff" />
            <path d="M87 14H89V28H87ZM89 15Q92 13 95 15T99 15V22Q96 23 94 22T89 22Z" fill="#f4f4f4" />
            <circle cx="98" cy="23" r="5" fill="#d8281c" />
            <path d="M96 21L100 25M100 21L96 25" stroke="#fff" strokeWidth="2" />
            <path d="M111 18H114L119 13V28L114 24H111Z" fill="#f4f4f4" />
            <path d="M121 17Q123 20 121 24M123 15Q127 20 123 26" fill="none" stroke="#e0e6f0" />
            <path d="M139 16H149V25H139ZM142 28H147M144.500 25V28M136 14V18Q136 20 138 20V28M134 14V17H139V14" fill="none" stroke="#f4f4f4" strokeWidth="1.500" />
          </TrayIcons>
          <Clock>19:31<br />2023/6/30</Clock>
          <ShowDesktop aria-label="Show desktop" />
        </Tray>
      </Taskbar>
    </Desktop>
  )
}

export default App
